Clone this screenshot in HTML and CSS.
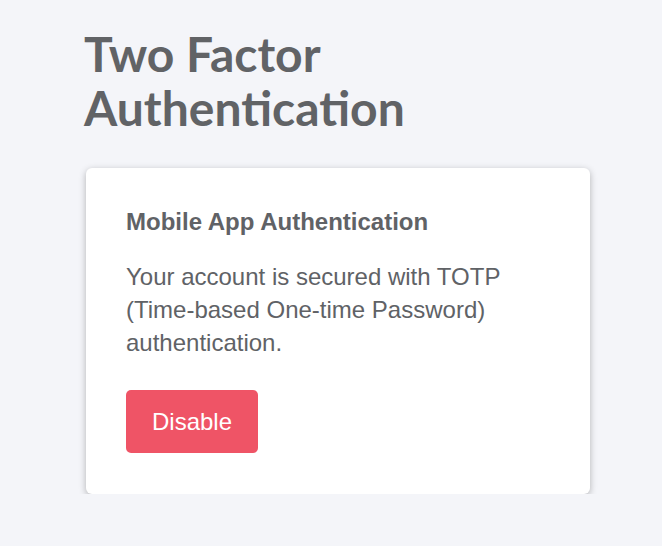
FILE: index.html
```html
<!DOCTYPE html>
<html>
<head>
<meta charset="utf-8">
<link rel="stylesheet" href="styles.css">
</head>
<body>
<main class="page">
  <h1 class="title">Two Factor Authentication</h1>
  <section class="card">
    <h2 class="card-title">Mobile App Authentication</h2>
    <p class="card-text">Your account is secured with TOTP (Time-based One-time Password) authentication.</p>
    <button class="btn-danger">Disable</button>
  </section>
</main>
</body>
</html>
```
FILE: styles.css
```css
html, body {
  margin: 0;
  padding: 0;
  background: #f4f5f9;
}
.page {
  padding: 27px 0 0 84px;
  width: 506px;
}
.title {
  margin: 0;
  font-family: Lato, "Noto Sans", sans-serif;
  font-weight: 700;
  font-size: 48px;
  line-height: 54px;
  color: #616366;
  width: 360px;
}
.card {
  margin-top: 33px;
  margin-left: 2px;
  background: #ffffff;
  border-radius: 6px;
  box-shadow: 0 2px 7px rgba(0, 0, 0, 0.28);
  padding: 40px 40px 41px 40px;
  font-family: "Liberation Sans", Arial, sans-serif;
  color: #606266;
}
.card-title {
  margin: 0;
  font-size: 24px;
  font-weight: 700;
  line-height: 28px;
}
.card-text {
  margin: 24px 0 31px 0;
  font-size: 24px;
  line-height: 33px;
}
.btn-danger {
  display: block;
  width: 132px;
  height: 63px;
  border: none;
  border-radius: 5px;
  background: #ef5466;
  color: #ffffff;
  font-family: "Liberation Sans", Arial, sans-serif;
  font-size: 24px;
  padding: 0;
}
```
